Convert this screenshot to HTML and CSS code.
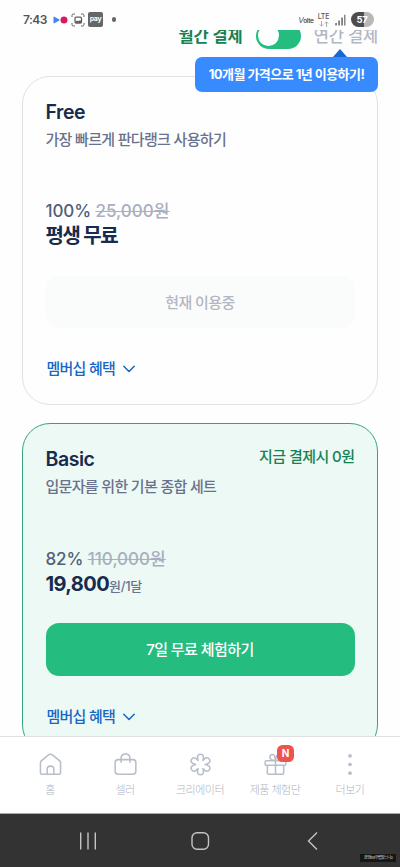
FILE: index.html
```html
<!DOCTYPE html>
<html lang="ko">
<head>
<meta charset="utf-8">
<meta name="viewport" content="width=device-width, initial-scale=1">
<title>멤버십</title>
<link rel="stylesheet" href="styles.css">
</head>
<body>
<div class="screen">
  <header class="status">
    <div class="status-left">
      <span class="clock">7:43</span>
      <svg class="media" width="15" height="8" viewBox="0 0 15 8"><path d="M.5 1.200Q.5.3 1.400.7L6.300 3.400Q7 4 6.300 4.600L1.400 7.300Q.5 7.700.5 6.800Z" fill="#4285f4"/><circle cx="11" cy="4" r="3.500" fill="#d81b60"/></svg>
      <svg class="capture" width="14" height="14" viewBox="0 0 14 14" fill="none" stroke="#606060"><path d="M1 4V2.500Q1 1 2.500 1H4M10 1h1.500Q13 1 13 2.500V4M13 10v1.500Q13 13 11.500 13H10M4 13H2.500Q1 13 1 11.500V10"/><rect x="4" y="4.200" width="6.500" height="5.800" rx="1.200" stroke-width="1.300"/><path d="M4 9l2-1.500 1.500.8L9 7l1.500 1.500V10H4Z" fill="#606060" stroke="none"/></svg>
      <span class="pay">pay</span>
      <span class="dot"></span>
    </div>
    <div class="status-right">
      <span class="volte"><i>V</i>olte</span>
      <span class="lte">LTE<svg width="10" height="6" viewBox="0 0 10 6" fill="none" stroke="#999" stroke-width=".8"><path d="M2.500 0v5M.8 3.400l1.700 1.800 1.700-1.800M7.500 6V1M5.800 2.600l1.700-1.800 1.700 1.800"/></svg></span>
      <svg width="11" height="12" viewBox="0 0 11 12" fill="#666"><path d="M.3 9h1.500v2.500H.3zM3.300 6.500h1.500v5H3.300zM6.300 3.500h1.500v8H6.300z"/><path d="M9 .8h1.500v10.700H9z" fill="#888"/></svg>
      <span class="battery">57</span>
    </div>
  </header>

  <main class="content">
    <div class="billing">
      <span class="monthly">월간 결제</span>
      <span class="toggle"></span>
      <span class="yearly">연간 결제<span class="tip">10개월 가격으로 1년 이용하기!</span></span>
    </div>

    <section class="card">
      <div class="card-head"><h2>Free</h2></div>
      <p class="desc">가장 빠르게 판다랭크 사용하기</p>
      <p class="discount">100% <s>25,000원</s></p>
      <p class="price free-price">평생 무료</p>
      <button class="btn current">현재 이용중</button>
      <a class="benefit">멤버십 혜택<svg width="12" height="8" viewBox="0 0 12 8"><path d="M.8 1.200 6 6.500 11.200 1.200"/></svg></a>
    </section>

    <section class="card basic">
      <div class="card-head"><h2>Basic</h2><span class="now">지금 결제시 0원</span></div>
      <p class="desc">입문자를 위한 기본 종합 세트</p>
      <p class="discount">82% <s>110,000원</s></p>
      <p class="price">19,800<small>원/1달</small></p>
      <button class="btn trial">7일 무료 체험하기</button>
      <a class="benefit">멤버십 혜택<svg width="12" height="8" viewBox="0 0 12 8"><path d="M.8 1.200 6 6.500 11.200 1.200"/></svg></a>
    </section>
  </main>

  <nav class="tabs">
    <a><svg viewBox="0 0 24 24"><path d="M1.500 10.200Q1.500 9 2.400 8.200L10 2Q12 .5 14 2L21.600 8.200Q22.500 9 22.500 10.200V20.500Q22.500 22.200 20.900 22.200H3.100Q1.500 22.200 1.500 20.500ZM8.500 22V17Q8.500 13.700 12 13.700T15.500 17V22"/></svg><span>홈</span></a>
    <a><svg viewBox="0 0 24 24"><rect x="1.200" y="6.900" width="21.600" height="15.200" rx="3"/><path d="M7.400 10.300V5.500Q7.400 1 12 1T16.600 5.500V10.300"/></svg><span>셀러</span></a>
    <a><svg viewBox="0 0 24 24"><path d="M9.500 7.700C8.200 3.600 9 1.300 12 1.300S15.800 3.600 14.500 7.700C17.400 4.500 19.800 4.100 21.300 6.600S21.200 11.100 17 12C21.200 12.900 22.800 14.800 21.300 17.400S17.400 19.500 14.500 16.300C15.800 20.400 15 22.700 12 22.700S8.200 20.400 9.500 16.300C6.600 19.500 4.200 19.900 2.700 17.400S2.800 12.900 7 12C2.800 11.100 1.200 9.200 2.700 6.600S6.600 4.500 9.500 7.700Z"/></svg><span>크리에이터</span></a>
    <a><svg viewBox="0 0 24 24"><rect x="1.200" y="8" width="21.600" height="4.800" rx="1"/><path d="M3.500 12.800V20.800Q3.500 22.100 4.800 22.100H19.200Q20.500 22.100 20.500 20.800V12.800M12 8V22M12 8C7 7.700 5.600 5.400 6.300 3.300S10 1.200 10.800 2.900 12 8 12 8C17 7.700 18.400 5.400 17.700 3.300S14 1.200 13.200 2.900 12 8 12 8"/></svg><b class="badge">N</b><span>제품 체험단</span></a>
    <a><svg viewBox="0 0 24 24" class="more"><circle cx="11.500" cy="3" r="1.900"/><circle cx="11.500" cy="12" r="1.900"/><circle cx="11.500" cy="21" r="1.900"/></svg><span>더보기</span></a>
  </nav>

  <footer class="system">
    <svg viewBox="0 0 20 20"><path d="M2.700 1.500v17M10 1.500v17M17.300 1.500v17"/></svg>
    <svg viewBox="0 0 20 20"><rect x="2" y="1.800" width="16.500" height="16.500" rx="5"/></svg>
    <svg viewBox="0 0 20 20"><path d="M15 1.500 6.500 10l8.500 8.500"/></svg>
    <span class="mark">광양tv4·부럽맞느니3</span>
  </footer>
</div>
</body>
</html>
```

FILE: styles.css
```css
* { box-sizing: border-box; }
body { margin: 0; font-family: Inter, "Noto Sans CJK KR", sans-serif; background: #fefefe; }
h2, p { margin: 0; }
.screen { width: 400px; height: 867px; display: flex; flex-direction: column; overflow: hidden; background: #fefefe; }

.status { height: 30px; flex: none; display: flex; justify-content: space-between; padding: 10px 26.500px 0 23px; color: #555; }
.status-left, .status-right { display: flex; align-items: center; height: 19px; }
.clock { width: 30px; font: 600 12px/18px Inter, sans-serif; letter-spacing: -.5px; }
.capture { margin-left: 3px; }
.pay { width: 15px; height: 15px; margin-left: 3px; border-radius: 2px; background: #666; color: #fff; font: 700 7px/13px Inter, sans-serif; text-align: center; letter-spacing: -.3px; }
.dot { width: 4.500px; height: 4.500px; margin-left: 8.500px; border-radius: 50%; background: #666; }
.volte { font: 600 6.500px/8px Inter, sans-serif; letter-spacing: -.4px; margin-right: 4px; padding-top: 1px; }
.volte i { font-size: 8px; font-weight: 400; }
.lte { width: 12px; margin-right: 5px; display: flex; flex-direction: column; align-items: center; font: 500 7px/7px Inter, sans-serif; letter-spacing: -.2px; }
.lte svg { margin-top: 1px; }
.battery { width: 23px; height: 15px; margin-left: 5px; border-radius: 8px; background: linear-gradient(90deg, #4d4d4d 58%, #b8b8b8 58%); color: #fff; font: 700 9.500px/15px Inter, sans-serif; text-align: center; letter-spacing: -.4px; }

.content { height: 706px; flex: none; overflow: hidden; padding: 0 22px; }
.billing { height: 36px; margin-top: -12px; margin-bottom: 21.500px; display: flex; align-items: center; justify-content: flex-end; font-size: 16.500px; line-height: 34px; white-space: nowrap; }
.monthly { font-weight: 700; color: #168253; letter-spacing: -.1px; }
.toggle { width: 45px; height: 26px; margin: 0 13px 0 13px; padding: 2px; border-radius: 13px; background: #25bd7f; }
.toggle::before { content: ""; display: block; width: 21px; height: 21px; border-radius: 50%; background: #fefefe; }
.yearly { position: relative; color: #b3b7c4; font-weight: 500; letter-spacing: -.15px; }
.tip { position: absolute; right: 0; top: 38px; z-index: 2; width: 183px; height: 35px; border-radius: 7px; background: #378bff; color: #fff; font-size: 13px; font-weight: 700; line-height: 34px; text-align: center; letter-spacing: -.53px; }
.tip::before { content: ""; position: absolute; right: 31px; top: -8px; border: 7px solid transparent; border-top: 0; border-bottom: 8px solid #1767d5; }

.card { height: 329.500px; padding: 23px 22.500px; margin-bottom: 18px; border: 1.500px solid #e0e1e4; border-radius: 28px; color: #172b4d; }
.basic { background: #edf9f5; border-color: #35a579; }
.card-head { display: flex; justify-content: space-between; height: 25px; }
h2 { font-size: 19.500px; line-height: 25px; font-weight: 600; letter-spacing: -.45px; }
.now { color: #168253; font-size: 15px; line-height: 19px; font-weight: 500; letter-spacing: -.55px; }
.desc { margin-top: 5px; height: 22px; font-size: 15px; line-height: 20px; font-weight: 500; color: #68728c; letter-spacing: -.68px; }
.discount { margin-top: 47.500px; height: 24px; font-size: 17px; line-height: 24px; font-weight: 500; color: #505f7a; letter-spacing: -.1px; }
s { color: #a9afbe; font-weight: 500; letter-spacing: .02px; text-decoration-thickness: 1px; }
.price { height: 25px; font-size: 20px; line-height: 26px; font-weight: 700; letter-spacing: -.6px; }
.free-price { letter-spacing: -1.300px; }
.price small { font-size: 13px; font-weight: 500; color: #68728c; letter-spacing: -.3px; }
.btn { display: block; width: 309px; height: 53px; margin: 27px 0 0; padding: 0; border: 0; border-radius: 13px; font: 500 15px/51px Inter, "Noto Sans CJK KR", sans-serif; letter-spacing: -.55px; }
.current { height: 52px; margin-top: 28px; background: #fafcfc; color: #b3b7c4; }
.trial { background: #25bd7f; color: #fff; }
.benefit { display: flex; align-items: center; gap: 8px; height: 22px; margin: 30px 0 0 1px; color: #1767c3; font-size: 15px; line-height: 22px; font-weight: 500; letter-spacing: -.75px; }
.benefit svg { fill: none; stroke: #1767c3; stroke-width: 1.500; stroke-linecap: round; stroke-linejoin: round; }

.tabs { height: 77px; flex: none; border-top: 1px solid #dfe1e2; background: #fff; display: grid; grid-template-columns: repeat(5, 75px); justify-content: center; }
.tabs a { position: relative; display: flex; flex-direction: column; align-items: center; padding-top: 16px; color: #b0b4c0; font-size: 11px; line-height: 16px; letter-spacing: -.5px; }
.tabs svg { width: 23px; height: 23px; fill: none; stroke: #b8bdca; stroke-width: 1.600; stroke-linejoin: round; }
.tabs span { margin-top: 6px; font-weight: 300; }
.tabs .more { fill: #b8bdca; stroke: none; }
.badge { position: absolute; left: 39.500px; top: 8px; width: 17px; height: 17px; border-radius: 5.500px; background: #f0524d; color: #fff; font-size: 10px; line-height: 17px; text-align: center; letter-spacing: 0; }

.system { position: relative; height: 54px; flex: none; background: #333; border-top: 1px solid #aaa; display: flex; justify-content: center; gap: 92px; padding-top: 17px; }
.system svg { width: 20px; height: 20px; fill: none; stroke: #c4c4c4; stroke-width: 1.400; }
.mark { position: absolute; left: 360px; top: 40px; width: 36px; height: 8px; background: #161616; color: #ddd; font-size: 4px; line-height: 8px; text-align: center; letter-spacing: -.6px; white-space: nowrap; }
```
